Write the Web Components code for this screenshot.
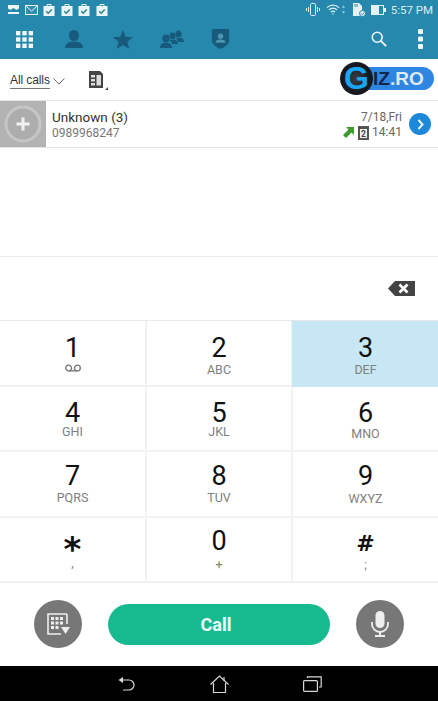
<!DOCTYPE html>
<html>
<head>
<meta charset="utf-8">
<title>Dialer</title>
<style>
    html, body { margin: 0; padding: 0; background: #fff; }
    body { width: 438px; height: 701px; overflow: hidden; font-family: Roboto, "Liberation Sans", sans-serif; }
    dialer-app { height: 701px; }
</style>
</head>
<body>
<dialer-app>
    <top-bar></top-bar>
    <filter-row></filter-row>
    <call-row name="Unknown (3)" number="0989968247" date="7/18,Fri" time="14:41"></call-row>
    <dial-input></dial-input>
    <dial-pad>
        <dial-key digit="1" icon="voicemail" top="19" gap="3"></dial-key>
        <dial-key digit="2" letters="ABC" top="19" gap="3"></dial-key>
        <dial-key digit="3" letters="DEF" top="19" gap="3" active></dial-key>
        <dial-key digit="4" letters="GHI" top="18.5" gap="0"></dial-key>
        <dial-key digit="5" letters="JKL" top="18.5" gap="0"></dial-key>
        <dial-key digit="6" letters="MNO" top="18.5" gap="2"></dial-key>
        <dial-key digit="7" letters="PQRS" top="16" gap="3"></dial-key>
        <dial-key digit="8" letters="TUV" top="16" gap="3"></dial-key>
        <dial-key digit="9" letters="WXYZ" top="16" gap="4"></dial-key>
        <dial-key digit="*" letters="," top="23" gap="-5" size="34"></dial-key>
        <dial-key digit="0" letters="+" top="15.5" gap="5"></dial-key>
        <dial-key digit="#" letters=";" top="18" gap="2" size="22"></dial-key>
    </dial-pad>
    <call-actions></call-actions>
    <nav-bar></nav-bar>
</dialer-app>

<script>
class DialerApp extends HTMLElement {
    connectedCallback() {
        this.attachShadow({ mode: 'open' });
        this.shadowRoot.innerHTML = `
            <style>
                :host { display: flex; flex-direction: column; width: 438px; }
            </style>
            <slot></slot>
        `;
    }
}

class TopBar extends HTMLElement {
    connectedCallback() {
        const bag = `<svg width="12" height="13" viewBox="0 0 12 13"><path d="M4 3V1.500h4V3" fill="none" stroke="#eaf6fa" stroke-width="1"/><rect x="0.500" y="3" width="11" height="10" fill="#eaf6fa"/><path d="M3.200 8.200l2 2 3.600-3.600" fill="none" stroke="#2b7f86" stroke-width="1.400"/></svg>`;
        this.attachShadow({ mode: 'open' });
        this.shadowRoot.innerHTML = `
            <style>
                :host { display: block; height: 59px; background: #2588ac; box-sizing: border-box; color: #dcedf3; }
                .status { height: 19px; display: flex; align-items: center; padding: 0 0 0 8px; }
                .notes { display: flex; align-items: center; gap: 5.500px; width: 105px; }
                .notes svg { display: block; flex: none; }
                .sys { margin-left: auto; display: flex; align-items: center; padding-right: 5px; font-size: 11.500px; }
                .sys svg { display: block; flex: none; }
                .clock { margin-left: 5px; }
                .tools { height: 40px; display: flex; align-items: center; }
                .tools svg { display: block; flex: none; }
                .tabs { display: flex; align-items: center; }
                .tab { width: 49px; display: flex; justify-content: center; }
                .right { margin-left: auto; display: flex; align-items: center; }
            </style>
            <div class="status">
                <div class="notes">
                    <svg width="11" height="9" viewBox="0 0 11 9"><rect width="11" height="9" fill="#eaf6fa"/><path d="M0 3.500l2.500 1.600L5.500 3l3 2 2.500-1.500V7H0z" fill="#2588ac"/></svg>
                    <svg width="13" height="10" viewBox="0 0 13 10"><rect x="0.500" y="0.500" width="12" height="9" fill="#2f8fb1" stroke="#eaf6fa"/><path d="M1 1l5.500 5L12 1" fill="none" stroke="#eaf6fa"/></svg>
                    ${bag}${bag}${bag}${bag}
                </div>
                <div class="sys">
                    <svg width="14" height="13" viewBox="0 0 14 13" fill="none" stroke="#dcedf3"><rect x="4.500" y="0.500" width="5" height="12" rx="1"/><path d="M2.500 4v5M0.500 5v3M11.500 4v5M13.500 5v3"/></svg>
                    <svg width="14" height="11" viewBox="0 0 14 11" fill="none" stroke="#dcedf3" stroke-width="1.200" style="margin-left:6px"><path d="M1 3.600a8.500 8.500 0 0 1 12 0M3 5.800a5.600 5.600 0 0 1 8 0M5 8a2.800 2.800 0 0 1 4 0"/><circle cx="7" cy="10" r="0.800" fill="#dcedf3" stroke="none"/></svg>
                    <svg width="3" height="9" viewBox="0 0 3 9" style="margin-left:2px"><path d="M1.500 0L3 3H0zM1.500 9L0 6h3z" fill="#8dc4d8"/></svg>
                    <svg width="13" height="14" viewBox="0 0 13 14" style="margin-left:8px"><path d="M0 0h6l3 3v6H7v4H0z" fill="#e4f2f7"/><path d="M2 1v3M4 1v3" stroke="#2588ac"/><circle cx="9.500" cy="10.500" r="3" fill="#e4f2f7" stroke="#2588ac"/><path d="M8 10.500l1.200 1.200 2-2" fill="none" stroke="#2588ac"/></svg>
                    <svg width="15" height="10" viewBox="0 0 15 10" style="margin-left:5px"><rect x="0.500" y="0.500" width="12" height="9" fill="none" stroke="#e4f2f7"/><rect x="1" y="1" width="7" height="8" fill="#e4f2f7"/><rect x="13" y="3" width="2" height="4" fill="#e4f2f7"/></svg>
                    <span class="clock">5:57 PM</span>
                </div>
            </div>
            <div class="tools">
                <div class="tabs">
                    <div class="tab">
                        <svg width="17" height="17" viewBox="0 0 17 17" fill="#eef7fa"><rect width="4.400" height="4.400"/><rect x="6.300" width="4.400" height="4.400"/><rect x="12.600" width="4.400" height="4.400"/><rect y="6.300" width="4.400" height="4.400"/><rect x="6.300" y="6.300" width="4.400" height="4.400"/><rect x="12.600" y="6.300" width="4.400" height="4.400"/><rect y="12.600" width="4.400" height="4.400"/><rect x="6.300" y="12.600" width="4.400" height="4.400"/><rect x="12.600" y="12.600" width="4.400" height="4.400"/></svg>
                    </div>
                    <div class="tab">
                        <svg width="18" height="18" viewBox="0 0 18 18" fill="#175a7b"><ellipse cx="9" cy="5.500" rx="5" ry="5.500"/><path d="M0 18c0-4 3-5.500 6-6.300h6c3 .8 6 2.300 6 6.300z"/></svg>
                    </div>
                    <div class="tab">
                        <svg width="20" height="19" viewBox="0 0 20 19" fill="#175a7b"><path d="M10 0l2.700 6.700 7.300.5-5.600 4.600 1.800 7L10 15l-6.200 3.800 1.800-7L0 7.200l7.300-.5z"/></svg>
                    </div>
                    <div class="tab">
                        <svg width="24" height="18" viewBox="0 0 24 18" fill="#175a7b"><ellipse cx="18.500" cy="4" rx="3" ry="3.600"/><path d="M16 8h5c2 .5 3 1.500 3 4h-6c-.4-1.800-1.200-2.500-2-4z"/><ellipse cx="12.500" cy="6" rx="3" ry="3.600"/><path d="M10 10h5c2 .5 3 1.500 3 4h-6c-.4-1.800-1.200-2.500-2-4z"/><ellipse cx="6" cy="8.500" rx="3.700" ry="4"/><path d="M0 18c0-3 1.500-4.500 4-5h4c2.500.5 4 2 4 5z"/></svg>
                    </div>
                    <div class="tab">
                        <svg width="19" height="20" viewBox="0 0 19 22"><path d="M0 0h19v12c0 5-5 8-9.500 10C5 20 0 17 0 12z" fill="#175a7b"/><circle cx="9.500" cy="8" r="3" fill="#4e95ae"/><path d="M4 15c0-2.500 2-3.500 5.500-3.500S15 12.500 15 15z" fill="#4e95ae"/></svg>
                    </div>
                </div>
                <div class="right">
                    <svg width="16" height="16" viewBox="0 0 18 18" fill="none" stroke="#eef7fa" stroke-width="1.800" style="margin-right:31px"><circle cx="7" cy="7" r="5.600"/><path d="M11 11l6 6" stroke-width="2.200"/></svg>
                    <svg width="5" height="20" viewBox="0 0 5 20" fill="#eef7fa" style="margin-right:15px"><rect width="5" height="5" rx="1"/><rect y="7.500" width="5" height="5" rx="1"/><rect y="15" width="5" height="5" rx="1"/></svg>
                </div>
            </div>
        `;
    }
}

class FilterRow extends HTMLElement {
    connectedCallback() {
        this.attachShadow({ mode: 'open' });
        this.shadowRoot.innerHTML = `
            <style>
                :host { display: flex; align-items: center; height: 42px; box-sizing: border-box; padding-left: 10px; background: #fff; border-bottom: 1px solid #e6e6e6; position: relative; }
                svg { display: block; flex: none; }
                .label { font-family: "Liberation Sans", sans-serif; font-size: 12px; color: #333; border-bottom: 1px solid #777; line-height: 14px; padding-bottom: 1px; margin-top: 2px; letter-spacing: -0.1px; }
                .logo { position: absolute; left: 340px; top: 3px; width: 94px; height: 33px; }
                .pill { position: absolute; left: 14px; top: 5px; width: 80px; height: 23px; border-radius: 12px; background: #2f86e0; color: #10264a; font: bold 19px/24px "Liberation Sans", sans-serif; padding-left: 19px; box-sizing: border-box; }
                .pill span { color: #dfeaf7; }
                .disc { position: absolute; left: 0; top: 0; width: 33px; height: 33px; border-radius: 50%; background: radial-gradient(circle, #3b3f46 0, #15171c 60%, #2b2e35 100%); color: #18a7f5; font: bold 32px/33px "Liberation Sans", sans-serif; text-align: center; }
            </style>
            <span class="label">All calls</span>
            <svg width="12" height="7" viewBox="0 0 12 7" fill="none" stroke="#666" style="margin:3px 0 0 3px"><path d="M0.500 0.500L6 6l5.500-5.500"/></svg>
            <svg width="20" height="19" viewBox="0 0 20 19" style="margin:2px 0 0 23px"><path d="M1 0h11l3 3v14H1z" fill="#444"/><rect x="3" y="4" width="4" height="2.500" fill="#ddd"/><rect x="3" y="8" width="4" height="2.500" fill="#ddd"/><rect x="3" y="12" width="4" height="2.500" fill="#ddd"/><rect x="8.500" y="4" width="4.500" height="10.500" fill="#ddd"/><path d="M20 16v3h-3z" fill="#444"/></svg>
            <div class="logo">
                <div class="pill">IZ<span>.RO</span></div>
                <div class="disc">G</div>
            </div>
        `;
    }
}

class CallRow extends HTMLElement {
    connectedCallback() {
        this.attachShadow({ mode: 'open' });
        this.shadowRoot.innerHTML = `
            <style>
                :host { display: flex; align-items: stretch; height: 47px; box-sizing: border-box; background: #fff; border-bottom: 1px solid #e3e3e3; }
                .avatar { width: 46px; background: #b3b3b3; display: flex; align-items: center; justify-content: center; flex: none; }
                svg { display: block; flex: none; }
                .who { margin-left: 6px; padding-top: 8px; }
                .name { font-size: 13.500px; line-height: 17px; color: #333; }
                .number { font-size: 12px; line-height: 14px; color: #777; }
                .when { margin-left: auto; padding-top: 9px; text-align: right; color: #666; font-size: 12px; line-height: 15px; }
                .line { display: flex; align-items: center; justify-content: flex-end; gap: 3px; }
                .go { width: 22px; height: 22px; border-radius: 50%; background: #1e88d8; flex: none; align-self: center; margin: 0 7px 0 7px; display: flex; align-items: center; justify-content: center; }
            </style>
            <div class="avatar">
                <svg width="38" height="38" viewBox="0 0 38 38"><circle cx="19" cy="19" r="17" fill="#adadad" stroke="#c6c6c6" stroke-width="3"/><path d="M19 12.500v13M12.500 19h13" stroke="#f2f2f2" stroke-width="3"/></svg>
            </div>
            <div class="who">
                <div class="name">${this.getAttribute('name')}</div>
                <div class="number">${this.getAttribute('number')}</div>
            </div>
            <div class="when">
                <div>${this.getAttribute('date')}</div>
                <div class="line">
                    <svg width="11" height="11" viewBox="0 0 11 11" style="margin-right:1px"><path d="M3 0h8v8L8.500 5.500 3 11 0 8l5.500-5.500z" fill="#3f9a2e"/></svg>
                    <svg width="11" height="14" viewBox="0 0 11 14"><rect width="11" height="14" fill="#555"/><rect x="2" y="3" width="7" height="9" fill="#eee"/><text x="5.500" y="11" font-size="8.500" font-weight="bold" text-anchor="middle" fill="#444" font-family="Roboto">2</text></svg>
                    <span>${this.getAttribute('time')}</span>
                </div>
            </div>
            <div class="go">
                <svg width="7" height="11" viewBox="0 0 7 11" fill="none" stroke="#e8f3fb" stroke-width="2"><path d="M1.500 1l4 4.500-4 4.500"/></svg>
            </div>
        `;
    }
}

class DialInput extends HTMLElement {
    connectedCallback() {
        this.attachShadow({ mode: 'open' });
        this.shadowRoot.innerHTML = `
            <style>
                :host { display: flex; align-items: center; justify-content: flex-end; height: 65px; margin-top: 108px; box-sizing: border-box; border-top: 1px solid #eaeaea; border-bottom: 1px solid #e9e9e9; padding: 0 23px 1px 0; background: #fff; }
                svg { display: block; }
            </style>
            <svg width="27" height="15" viewBox="0 0 27 15"><path d="M7 0h20v15H7L0 7.500z" fill="#444"/><path d="M11.500 3.500l8 8M19.500 3.500l-8 8" stroke="#fff" stroke-width="2.600"/></svg>
        `;
    }
}

class DialPad extends HTMLElement {
    connectedCallback() {
        this.attachShadow({ mode: 'open' });
        this.shadowRoot.innerHTML = `
            <style>
                :host { display: grid; grid-template-columns: 147px 146px 145px; grid-auto-rows: 65.500px; background: #fff; }
            </style>
            <slot></slot>
        `;
    }
}

class DialKey extends HTMLElement {
    connectedCallback() {
        const digit = this.getAttribute('digit');
        const letters = this.getAttribute('letters') || '';
        const top = this.getAttribute('top') || 19;
        const gap = this.getAttribute('gap') || 0;
        const size = this.getAttribute('size');
        const sub = this.getAttribute('icon') === 'voicemail'
            ? `<svg width="16" height="8" viewBox="0 0 16 8" fill="none" stroke="#777" stroke-width="1.300" style="display:block;margin-top:5px"><circle cx="3.600" cy="4" r="2.900"/><circle cx="12.400" cy="4" r="2.900"/><path d="M3.600 6.900h8.800"/></svg>`
            : `<span class="letters">${letters}</span>`;
        this.attachShadow({ mode: 'open' });
        this.shadowRoot.innerHTML = `
            <style>
                :host { display: flex; flex-direction: column; align-items: center; box-sizing: border-box; padding-top: ${top}px; border-right: 2px solid #f2f2f2; border-bottom: 2px solid #f2f2f2; background: #fff; }
                :host(:nth-child(3n)) { border-right: 0; }
                :host([active]) { background: #c7e7f4; border-color: #c7e7f4; box-shadow: -1px 0 0 #c7e7f4; }
                .digit { font-size: 27px; line-height: 16px; height: 16px; color: #111; }
                .symbol { font-family: "DejaVu Sans", sans-serif; font-weight: bold; font-size: ${size}px; }
                .letters { font-size: 12.500px; line-height: 15px; color: #808080; }
                .below { margin-top: ${gap}px; height: 15px; }
            </style>
            <span class="digit ${size ? 'symbol' : ''}">${digit}</span>
            <div class="below">${sub}</div>
        `;
    }
}

class CallActions extends HTMLElement {
    connectedCallback() {
        this.attachShadow({ mode: 'open' });
        this.shadowRoot.innerHTML = `
            <style>
                :host { display: flex; align-items: center; height: 83px; box-sizing: border-box; padding: 0 34px 1px; background: #fff; justify-content: space-between; }
                .round { width: 48px; height: 48px; border-radius: 50%; background: #777; display: flex; align-items: center; justify-content: center; flex: none; }
                svg { display: block; }
                .call { width: 222px; height: 41px; border-radius: 21px; background: #17ba8f; color: #eefaf6; font-size: 18px; font-weight: 700; display: flex; align-items: center; justify-content: center; padding-right: 6px; box-sizing: border-box; }
            </style>
            <div class="round">
                <svg width="24" height="24" viewBox="0 0 24 24"><path d="M21 2H2v20h13" fill="none" stroke="#eee" stroke-width="1.600"/><path d="M21 2v10" stroke="#eee" stroke-width="1.600"/><g fill="#eee"><rect x="5" y="5" width="3" height="3"/><rect x="9.500" y="5" width="3" height="3"/><rect x="14" y="5" width="3" height="3"/><rect x="5" y="9.500" width="3" height="3"/><rect x="9.500" y="9.500" width="3" height="3"/><rect x="14" y="9.500" width="3" height="3"/><rect x="5" y="14" width="3" height="3"/><rect x="9.500" y="14" width="3" height="3"/></g><path d="M15 15h9l-4.500 7z" fill="#eee"/></svg>
            </div>
            <div class="call">Call</div>
            <div class="round">
                <svg width="18" height="26" viewBox="0 0 18 26"><rect x="4.500" y="0" width="9" height="17" rx="4.500" fill="#eee"/><path d="M1 11v2a8 8 0 0 0 16 0v-2" fill="none" stroke="#eee" stroke-width="1.800"/><path d="M9 21v3M4 25h10" stroke="#eee" stroke-width="2"/></svg>
            </div>
        `;
    }
}

class NavBar extends HTMLElement {
    connectedCallback() {
        this.attachShadow({ mode: 'open' });
        this.shadowRoot.innerHTML = `
            <style>
                :host { display: flex; align-items: center; height: 35px; background: #000; padding-left: 118px; box-sizing: border-box; }
                svg { display: block; flex: none; }
            </style>
            <svg width="17" height="17" viewBox="0 0 17 17" fill="none" stroke="#d8d8d8" stroke-width="1.200"><path d="M2 5h9a5 5 0 0 1 0 10H5"/><path d="M0.500 5L5 2v6z" fill="#d8d8d8" stroke="none"/></svg>
            <svg width="19" height="18" viewBox="0 0 19 18" fill="none" stroke="#d8d8d8" stroke-width="1.200" style="margin-left:75px"><path d="M0.500 9.500L9.500 1l9 8.500"/><path d="M3.500 8v9.500h12V8M14 2v4"/></svg>
            <svg width="19" height="16" viewBox="0 0 19 16" fill="none" stroke="#d8d8d8" stroke-width="1.200" style="margin-left:74px"><rect x="0.600" y="4.600" width="13.800" height="10.800" rx="1"/><path d="M4.500 2V0.800h13.700v10.200H16"/></svg>
        `;
    }
}

customElements.define('dialer-app', DialerApp);
customElements.define('top-bar', TopBar);
customElements.define('filter-row', FilterRow);
customElements.define('call-row', CallRow);
customElements.define('dial-input', DialInput);
customElements.define('dial-pad', DialPad);
customElements.define('dial-key', DialKey);
customElements.define('call-actions', CallActions);
customElements.define('nav-bar', NavBar);
</script>
</body>
</html>
